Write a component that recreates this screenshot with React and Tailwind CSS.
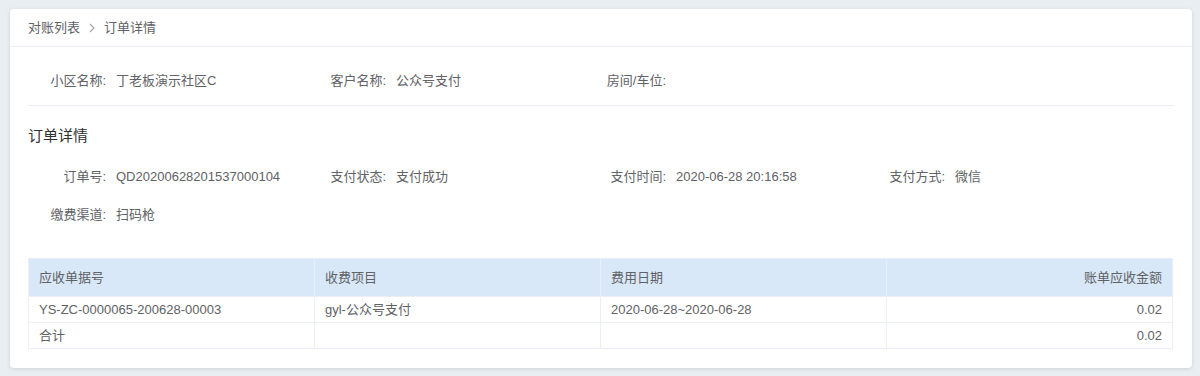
const baseInfo = [
  { label: "小区名称:", value: "丁老板演示社区C" },
  { label: "客户名称:", value: "公众号支付" },
  { label: "房间/车位:", value: "" },
];

const orderInfo = [
  { label: "订单号:", value: "QD20200628201537000104" },
  { label: "支付状态:", value: "支付成功" },
  { label: "支付时间:", value: "2020-06-28 20:16:58" },
  { label: "支付方式:", value: "微信" },
  { label: "缴费渠道:", value: "扫码枪" },
];

const rows = [
  ["YS-ZC-0000065-200628-00003", "gyl-公众号支付", "2020-06-28~2020-06-28", "0.02"],
  ["合计", "", "", "0.02"],
];

function Field({ label, value }) {
  return (
    <div className="flex items-center h-[20px]">
      <span className="w-[80px] text-right pr-[10px] text-[#606266]">{label}</span>
      <span className="text-[#606266]">{value}</span>
    </div>
  );
}

export default function App() {
  return (
    <div
      className="w-[1200px] h-[376px] bg-[#e9eef3] px-[10px] pt-[9px] text-[13px]"
      style={{ fontFamily: '"Liberation Sans", "Noto Sans CJK SC", sans-serif' }}
    >
      <div className="bg-white rounded-[4px] shadow-[0_1px_4px_rgba(0,0,0,0.12)] h-[359px] w-[1182px]">
        <div className="h-[38px] border-b border-[#ebeef5] flex items-center px-[18px] text-[#606266]">
          <span>对账列表</span>
          <svg className="mx-[8px]" width="8" height="10" viewBox="0 0 8 10">
            <path d="M2 1 L6 5 L2 9" fill="none" stroke="#a0a4ab" strokeWidth="1.1" />
          </svg>
          <span>订单详情</span>
        </div>

        <div className="px-[18px]">
          <div className="border-b border-[#ebeef5] pt-[24px] pb-[14px]">
            <div className="grid grid-cols-[280px_280px_280px_280px] ml-[8px]">
              {baseInfo.map((f) => (
                <Field key={f.label} {...f} />
              ))}
            </div>
          </div>

          <div className="pt-[20px] text-[15px] text-[#303133] leading-[20px]">订单详情</div>

          <div className="grid grid-cols-[280px_280px_279px_280px] gap-y-[18px] pt-[21px] ml-[8px]">
            {orderInfo.map((f) => (
              <Field key={f.label} {...f} />
            ))}
          </div>

          <table className="mt-[33px] w-[1145px] table-fixed border-collapse border border-[#ebeef5] text-[#606266]">
            <thead>
              <tr className="bg-[#d9e8f8] h-[38px]">
                <th className="font-normal text-left px-[10px] border-r border-[#ebeef5]">应收单据号</th>
                <th className="font-normal text-left px-[10px] border-r border-[#ebeef5]">收费项目</th>
                <th className="font-normal text-left px-[10px] border-r border-[#ebeef5]">费用日期</th>
                <th className="font-normal text-right px-[10px]">账单应收金额</th>
              </tr>
            </thead>
            <tbody>
              {rows.map((r, i) => (
                <tr key={i} className="h-[26px] border-t border-[#ebeef5]">
                  <td className="px-[10px] border-r border-[#ebeef5]">{r[0]}</td>
                  <td className="px-[10px] border-r border-[#ebeef5]">{r[1]}</td>
                  <td className="px-[10px] border-r border-[#ebeef5]">{r[2]}</td>
                  <td className="px-[10px] text-right">{r[3]}</td>
                </tr>
              ))}
            </tbody>
          </table>
        </div>
      </div>
    </div>
  );
}
